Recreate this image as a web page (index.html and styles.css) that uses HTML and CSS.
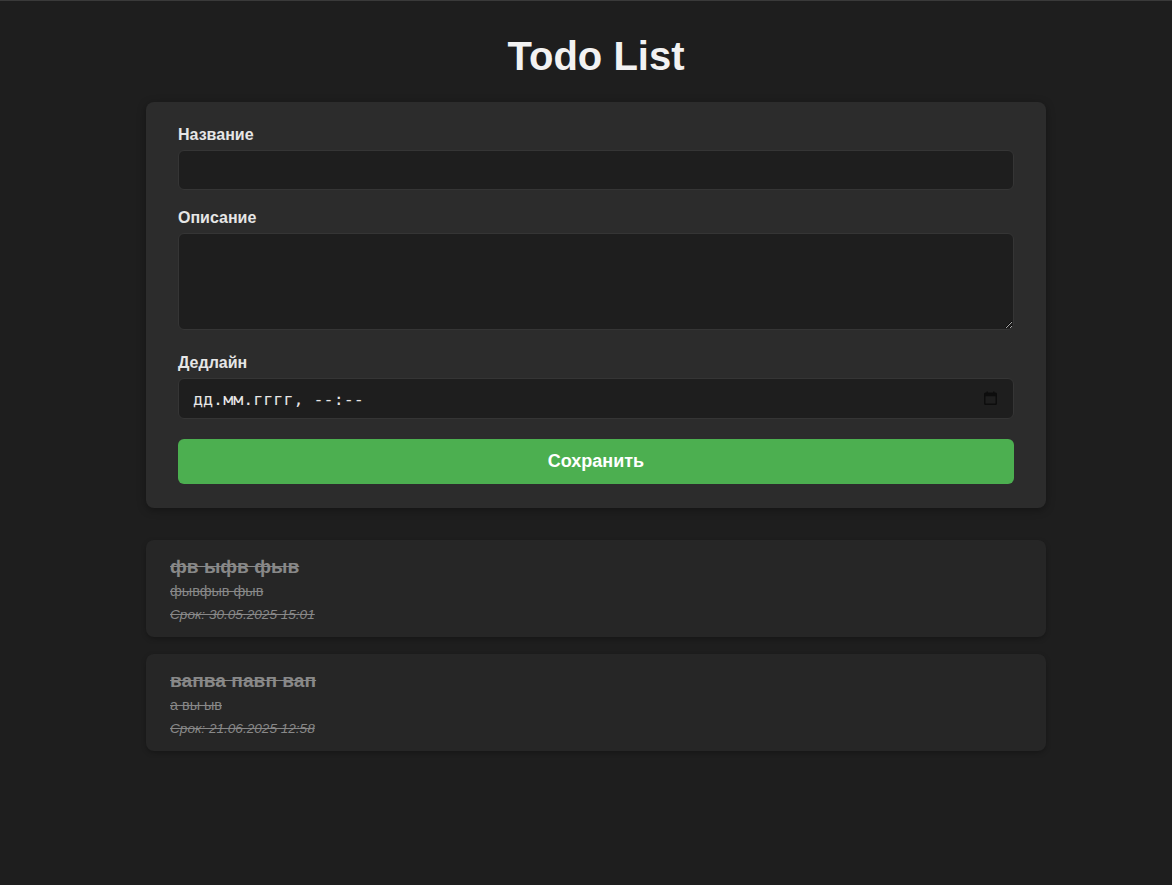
FILE: index.html
```html
<!DOCTYPE html>
<html lang="ru">
<head>
<meta charset="utf-8">
<title>Todo List</title>
<link rel="stylesheet" href="styles.css">
</head>
<body>
<div class="container">
  <h1 class="title">Todo List</h1>
  <form class="form-card">
    <div class="group">
      <label class="label" for="name">Название</label>
      <input class="field" id="name" type="text">
    </div>
    <div class="group group-area">
      <label class="label label-area" for="desc">Описание</label>
      <textarea class="field area" id="desc"></textarea>
    </div>
    <div class="group group-date">
      <label class="label" for="deadline">Дедлайн</label>
      <div class="date-wrap">
        <input class="field date" id="deadline" type="text" placeholder="дд.мм.гггг, --:--">
        <svg class="cal" width="13" height="14" viewBox="0 0 13 14" aria-hidden="true">
          <rect x="0.75" y="2.25" width="11.5" height="11" rx="0.8" fill="none" stroke="#0d0d0d" stroke-width="1.5"/>
          <rect x="0.75" y="2.25" width="11.5" height="3" fill="#0d0d0d"/>
          <rect x="2.5" y="0.5" width="1.5" height="2.5" fill="#0d0d0d"/>
          <rect x="9" y="0.5" width="1.5" height="2.5" fill="#0d0d0d"/>
        </svg>
      </div>
    </div>
    <button class="save" type="button">Сохранить</button>
  </form>

  <div class="tasks">
    <div class="task done">
      <div class="task-title">фв ыфв фыв</div>
      <div class="task-desc">фывфыв фыв</div>
      <div class="task-date">Срок: 30.05.2025 15:01</div>
    </div>
    <div class="task done">
      <div class="task-title">вапва павп вап</div>
      <div class="task-desc">а вы ыв</div>
      <div class="task-date">Срок: 21.06.2025 12:58</div>
    </div>
  </div>
</div>
</body>
</html>
```

FILE: styles.css
```css
html, body {
  margin: 0;
  background: #1e1e1e;
}
body {
  border-top: 1px solid #3a3a3a;
  padding: 32px 0 0 20px;
  font-family: "Liberation Sans", Arial, sans-serif;
  color: #e0e0e0;
  min-height: 884px;
  box-sizing: border-box;
}
.container {
  width: 900px;
  margin: 0 auto;
}
.title {
  margin: 0 0 23px;
  text-align: center;
  font-size: 40px;
  font-weight: bold;
  color: #f2f2f2;
  line-height: 46px;
}
.form-card {
  background: #2c2c2c;
  border-radius: 8px;
  padding: 24px 32px 24px;
  box-shadow: 0 2px 8px rgba(0, 0, 0, 0.35);
  margin: 0 0 32px;
}
.group {
  margin-bottom: 19px;
}
.group-area {
  margin-bottom: 24px;
}
.group-date {
  margin-bottom: 20px;
}
.label {
  display: block;
  font-size: 16px;
  font-weight: bold;
  color: #e6e6e6;
  margin-bottom: 6px;
  line-height: 18.4px;
}
.label-area {
  margin-bottom: 5px;
}
.field {
  display: block;
  width: 100%;
  box-sizing: border-box;
  height: 40px;
  background: #1e1e1e;
  border: 1px solid #353535;
  border-radius: 6px;
  color: #e0e0e0;
  font-family: "Liberation Sans", Arial, sans-serif;
  font-size: 16px;
  padding: 10px 12px;
  margin: 0;
  outline: none;
}
.area {
  height: 97px;
  resize: vertical;
}
.date-wrap {
  position: relative;
}
.date {
  font-family: "DejaVu Sans Mono", monospace;
  font-size: 16.7px;
  padding: 10px 14px;
  height: 41px;
}
.date::placeholder {
  color: #e6e6e6;
  opacity: 1;
}
.cal {
  position: absolute;
  right: 17px;
  top: 13px;
}
.save {
  display: block;
  width: 100%;
  height: 45px;
  background: #4caf50;
  color: #ffffff;
  border: none;
  border-radius: 6px;
  font-family: "Liberation Sans", Arial, sans-serif;
  font-size: 18px;
  font-weight: bold;
  padding: 0;
  cursor: pointer;
}
.tasks {
  display: flex;
  flex-direction: column;
  gap: 17px;
}
.task {
  background: #262626;
  border-radius: 8px;
  padding: 16px 24px 15px;
  box-shadow: 0 2px 5px rgba(0, 0, 0, 0.25);
  height: 97px;
  box-sizing: border-box;
}
.task-title {
  font-size: 19.2px;
  font-weight: bold;
  line-height: 22px;
  margin-bottom: 5px;
}
.task-desc {
  font-size: 14.4px;
  line-height: 16.5px;
  margin-bottom: 7px;
}
.task-date {
  font-size: 13.6px;
  font-style: italic;
  line-height: 15.6px;
}
.done .task-title,
.done .task-desc,
.done .task-date {
  color: #888888;
  text-decoration: line-through;
}
```
